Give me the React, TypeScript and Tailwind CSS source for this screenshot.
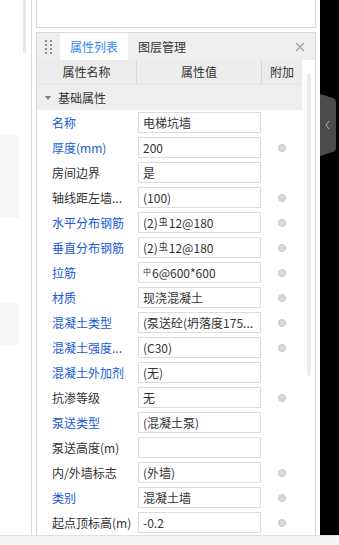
import React from "react";

type Row = {
  name: string;
  value: React.ReactNode;
  blue: boolean;
  dot: boolean;
};

const Rebar3 = () => (
  <span>
    (2)<span className="text-[9px] align-[3px] mx-[1px]">虫</span>12@180
  </span>
);

const rows: Row[] = [
  { name: "名称", value: "电梯坑墙", blue: true, dot: false },
  { name: "厚度(mm)", value: "200", blue: true, dot: true },
  { name: "房间边界", value: "是", blue: false, dot: false },
  { name: "轴线距左墙...", value: "(100)", blue: false, dot: true },
  { name: "水平分布钢筋", value: <Rebar3 />, blue: true, dot: true },
  { name: "垂直分布钢筋", value: <Rebar3 />, blue: true, dot: true },
  {
    name: "拉筋",
    value: (
      <span>
        <span className="text-[8px] align-[3px] mr-[1px]">中</span>6@600*600
      </span>
    ),
    blue: true,
    dot: true,
  },
  { name: "材质", value: "现浇混凝土", blue: true, dot: true },
  { name: "混凝土类型", value: "(泵送砼(坍落度175...", blue: true, dot: true },
  { name: "混凝土强度...", value: "(C30)", blue: true, dot: true },
  { name: "混凝土外加剂", value: "(无)", blue: true, dot: false },
  { name: "抗渗等级", value: "无", blue: false, dot: true },
  { name: "泵送类型", value: "(混凝土泵)", blue: true, dot: false },
  { name: "泵送高度(m)", value: "", blue: false, dot: false },
  { name: "内/外墙标志", value: "(外墙)", blue: false, dot: true },
  { name: "类别", value: "混凝土墙", blue: true, dot: true },
  { name: "起点顶标高(m)", value: "-0.2", blue: false, dot: true },
];

export default function App() {
  return (
    <div
      className="w-[339px] h-[545px] overflow-hidden bg-white flex flex-col text-[12px] text-[#333]"
      style={{ fontFamily: '"Noto Sans CJK SC", "Noto Sans", sans-serif' }}
    >
      <div className="h-[535px] flex">
        {/* left strip */}
        <div className="w-[36px] flex shrink-0">
          <div className="w-[19px] flex flex-col">
            <div className="h-[135px]" />
            <div className="h-[83px] bg-[#f5f6f8]" />
            <div className="h-[85px]" />
            <div className="h-[42px] bg-[#f5f6f8]" />
          </div>
          <div className="w-[4px]" />
          <div className="w-[3px] h-[53px] rounded-b bg-[#e6e6e6]" />
          <div className="w-[5px]" />
          <div className="w-[1px] bg-[#d8d8d8]" />
        </div>

        {/* middle panels */}
        <div className="w-[280px] flex flex-col shrink-0">
          <div className="h-[28px] border-x border-b border-[#d9d9d9]" />
          <div className="h-[4px]" />
          <div className="flex-1 border-x border-t border-[#d9d9d9] flex flex-col overflow-hidden">
            {/* tab bar */}
            <div className="h-[29px] bg-[#eeeeee] flex items-stretch">
              <div className="w-[23px] flex items-center justify-center">
                <div className="grid grid-cols-2 gap-x-[3px] gap-y-[2px]">
                  {Array.from({ length: 8 }).map((_, i) => (
                    <div key={i} className="w-[2px] h-[2px] bg-[#8c8c8c]" />
                  ))}
                </div>
              </div>
              <div className="w-[68px] bg-white flex items-center justify-center text-[#3a86f7] leading-none">
                属性列表
              </div>
              <div className="pl-[10px] flex items-center leading-none">图层管理</div>
              <div className="flex-1" />
              <div className="w-[30px] flex items-center justify-center">
                <svg width="10" height="10" viewBox="0 0 10 10">
                  <path d="M1 1 L9 9 M9 1 L1 9" stroke="#a0a0a0" strokeWidth="1.2" />
                </svg>
              </div>
            </div>

            <div className="flex flex-1">
              <div className="w-[265px] flex flex-col">
                {/* column header */}
                <div className="h-[25px] bg-[#ececec] flex leading-none border-b border-[#e2e2e2]">
                  <div className="w-[100px] flex items-center justify-center border-r border-[#d6d6d6]">属性名称</div>
                  <div className="w-[125px] flex items-center justify-center border-r border-[#d6d6d6]">属性值</div>
                  <div className="w-[40px] flex items-center justify-center">附加</div>
                </div>
                {/* group row */}
                <div className="h-[25px] bg-[#eeeeee] flex items-center leading-none">
                  <svg width="6" height="4" viewBox="0 0 6 4" className="ml-[8px] mr-[7px]">
                    <path d="M0 0 L6 0 L3 4 Z" fill="#7a7a7a" />
                  </svg>
                  基础属性
                </div>
                {rows.map((r, i) => (
                  <div key={i} className="h-[25px] flex items-center shrink-0">
                    <div
                      className={`w-[100px] pl-[15px] whitespace-nowrap leading-none ${
                        r.blue ? "text-[#2158d8]" : "text-[#333]"
                      }`}
                    >
                      {r.name}
                    </div>
                    <div className="w-[125px] pl-[1px]">
                      <div className="w-[123px] h-[21px] border border-[#dcdcdc] flex items-center pl-[4px] whitespace-nowrap leading-none overflow-hidden">
                        {r.value}
                      </div>
                    </div>
                    <div className="w-[40px] flex justify-center">
                      {r.dot && (
                        <div className="w-[8px] h-[8px] rounded-full bg-[#dadada] border border-[#c6c6c6]" />
                      )}
                    </div>
                  </div>
                ))}
              </div>
              <div className="w-[13px] pl-[5px] pt-[13px]">
                <div className="w-[4px] h-[303px] rounded-full bg-[#ececec]" />
              </div>
            </div>
          </div>
        </div>

        {/* right side */}
        <div className="w-[4px] shrink-0" />
        <div className="flex-1 bg-black pt-[94px]">
          <svg width="17" height="62" viewBox="0 0 17 62">
            <path d="M0 0 L13 4 Q16 5 16 8 L16 54 Q16 57 13 58 L0 62 Z" fill="#4b4b4b" />
            <path d="M9 27 L6 31 L9 35" stroke="#b0b0b0" strokeWidth="1" fill="none" />
          </svg>
        </div>
      </div>
      <div className="flex-1 bg-[#f4f4f4] border-t border-[#e0e0e0]" />
    </div>
  );
}
